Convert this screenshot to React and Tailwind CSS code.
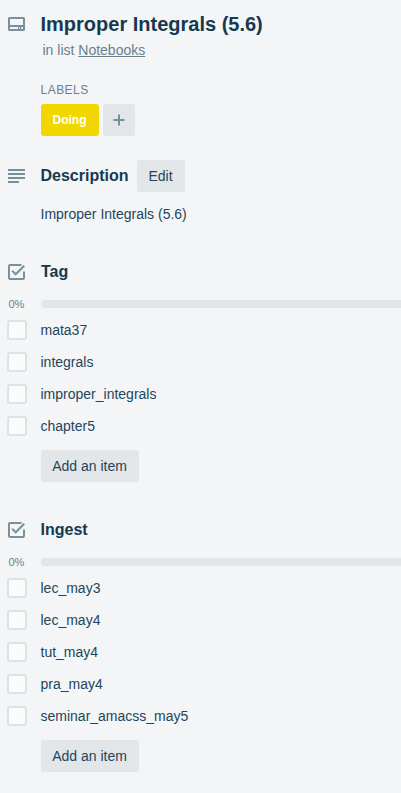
const tagItems = ['mata37', 'integrals', 'improper_integrals', 'chapter5'];
const ingestItems = ['lec_may3', 'lec_may4', 'tut_may4', 'pra_may4', 'seminar_amacss_may5'];

function CardIcon() {
  return (
    <svg className="block" width="17" height="14" viewBox="0 0 17 14">
      <path
        fill="#798f9b"
        fillRule="evenodd"
        d="M1.500 0h14A1.500 1.500 0 0 1 17 1.500v11a1.500 1.500 0 0 1-1.500 1.500h-14A1.500 1.500 0 0 1 0 12.500v-11A1.500 1.500 0 0 1 1.500 0ZM2 2v6h13V2H2Zm0 8v2h8v-2H2Zm9.300 0v2h.7v-2h-.7Zm2 0v2H15v-2h-1.700Z"
      />
    </svg>
  );
}

function DescriptionIcon() {
  return (
    <svg className="block" width="17" height="14" viewBox="0 0 17 14" fill="#798f9b">
      <path d="M0 0h17v2H0zM0 4h17v2H0zM0 8h17v2H0zM0 12h11v2H0z" />
    </svg>
  );
}

function ChecklistIcon() {
  return (
    <svg className="block" width="17" height="16" viewBox="0 0 17 16" fill="none" stroke="#798f9b">
      <path strokeWidth="2" d="M13.500 1H2a1 1 0 0 0-1 1v12a1 1 0 0 0 1 1h13a1 1 0 0 0 1-1V7.500" />
      <path strokeWidth="2" d="M4.200 6.800 7.700 10.300 16.200 1.800" />
    </svg>
  );
}

function Checklist({ title, items, titleClass }) {
  return (
    <section>
      <div className="flex h-8 items-center">
        <div className="w-[33px] shrink-0"><ChecklistIcon /></div>
        <h3 className={titleClass}>{title}</h3>
      </div>
      <div className="mt-3 flex h-2 items-center">
        <span className="w-[33px] shrink-0 pl-[0.5px] text-[11px] leading-[10px] text-[#6b808c]">0%</span>
        <div className="h-2 flex-1 rounded-l bg-[#e2e6e9]" />
      </div>
      <ul className="mt-1.5">
        {items.map((item) => (
          <li key={item} className="flex h-8 items-center">
            <span className="-ml-px mr-[13.5px] size-5 shrink-0 rounded-[3px] border-2 border-[#dfe1e6] bg-[#fafcfc]" />
            <span className="text-sm leading-5">{item}</span>
          </li>
        ))}
      </ul>
      <button className="mt-2 ml-[33px] block h-8 w-[98px] rounded-[3px] bg-[#e2e6e9] pr-px text-sm">Add an item</button>
    </section>
  );
}

export default function App() {
  return (
    <main className="h-[793px] overflow-hidden bg-[#f4f5f7] pl-2 font-['Liberation_Sans',Arial,sans-serif] text-[#23455a]">
      <header className="pt-3">
        <div className="flex h-6 items-center">
          <div className="w-[32.5px] shrink-0"><CardIcon /></div>
          <h1 className="text-[20px] leading-6 font-bold whitespace-nowrap text-[#17394d]">Improper Integrals (5.6)</h1>
        </div>
        <p className="mt-1 ml-[34.5px] text-sm leading-5 text-[#6b808c]">
          in list <a className="underline">Notebooks</a>
        </p>
      </header>
      <section className="mt-5 ml-[33px]">
        <h3 className="-ml-[0.5px] h-5 text-xs leading-5 tracking-[0.48px] text-[#6b808c]">LABELS</h3>
        <div className="mt-1 flex gap-1">
          <span className="flex h-8 w-[58px] items-center justify-center rounded-[3px] bg-[#f2d600] pr-px text-xs font-bold text-white">Doing</span>
          <button className="flex size-8 items-center justify-center rounded-[3px] bg-[#e2e6e9]">
            <svg className="-ml-px" width="12" height="12" viewBox="0 0 12 12"><path d="M5 .5h2V5h4.500v2H7v4.500H5V7H.5V5H5z" fill="#798f9b" /></svg>
          </button>
        </div>
      </section>
      <section className="mt-6">
        <div className="flex h-8 items-center">
          <div className="w-[32.5px] shrink-0"><DescriptionIcon /></div>
          <h3 className="w-[96.5px] text-base font-bold text-[#17394d]">Description</h3>
          <button className="h-8 w-12 rounded-[3px] bg-[#e2e6e9] pr-px text-sm">Edit</button>
        </div>
        <p className="mt-3 ml-[32.5px] text-sm leading-5">Improper Integrals (5.6)</p>
      </section>
      <div className="mt-8">
        <Checklist title="Tag" items={tagItems} titleClass="text-base font-bold text-[#17394d]" />
      </div>
      <div className="mt-8">
        <Checklist title="Ingest" items={ingestItems} titleClass="-ml-[0.5px] text-base font-bold text-[#17394d]" />
      </div>
    </main>
  );
}
